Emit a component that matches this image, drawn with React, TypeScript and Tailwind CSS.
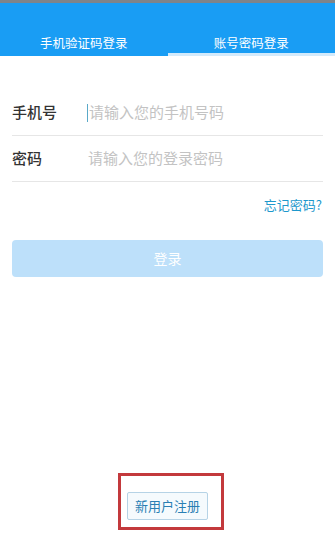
export default function App() {
  return (
    <div
      className="w-[335px] h-[534px] flex flex-col bg-white overflow-hidden"
      style={{ fontFamily: '"Noto Sans CJK SC", "Noto Sans", sans-serif' }}
    >
      {/* 顶部状态条 */}
      <div className="h-[3px] bg-[#7f8489]" />

      {/* 登录方式切换 */}
      <div className="h-[53px] bg-[#199df4] flex">
        <div className="flex-1 flex items-end justify-center pb-[7px]">
          <span className="text-[12.5px] text-white leading-none">手机验证码登录</span>
        </div>
        <div className="flex-1 flex flex-col">
          <div className="flex-1 flex items-end justify-center pb-[4px]">
            <span className="text-[12.5px] text-white leading-none">账号密码登录</span>
          </div>
          <div className="h-[3px] bg-[#d3eafb]" />
        </div>
      </div>

      <div className="px-3 pt-[34px]">
        <div className="h-[46px] flex items-center border-b border-[#e6e6e6]">
          <span className="w-[75px] text-[15px] text-[#333] font-medium">手机号</span>
          <span className="w-px h-[18px] bg-[#5aa9c8] mr-[1px]" />
          <span className="text-[15px] text-[#c3c3c3]">请输入您的手机号码</span>
        </div>
        <div className="h-[46px] flex items-center border-b border-[#e6e6e6]">
          <span className="w-[76px] text-[15px] text-[#333] font-medium">密码</span>
          <span className="text-[15px] text-[#c3c3c3]">请输入您的登录密码</span>
        </div>

        <div className="flex justify-end pt-[16px] pr-[1px]">
          <span className="text-[13px] text-[#1d98cc] leading-none">忘记密码?</span>
        </div>

        <button className="mt-[29px] w-full h-[37px] rounded-[4px] bg-[#bde0fa] text-white text-[14px]">
          登录
        </button>
      </div>

      <div className="mt-auto mb-[4px] flex justify-center pl-[7px]">
        <div className="border-[3px] border-[#c3393c] pt-[16px] pb-[7px] pl-[6px] pr-[13px]">
          <button className="w-[81px] h-[28px] border border-[#b6d3e6] bg-[#f5fafd] rounded-[2px] text-[13px] text-[#2a7fb3]">
            新用户注册
          </button>
        </div>
      </div>
    </div>
  );
}
